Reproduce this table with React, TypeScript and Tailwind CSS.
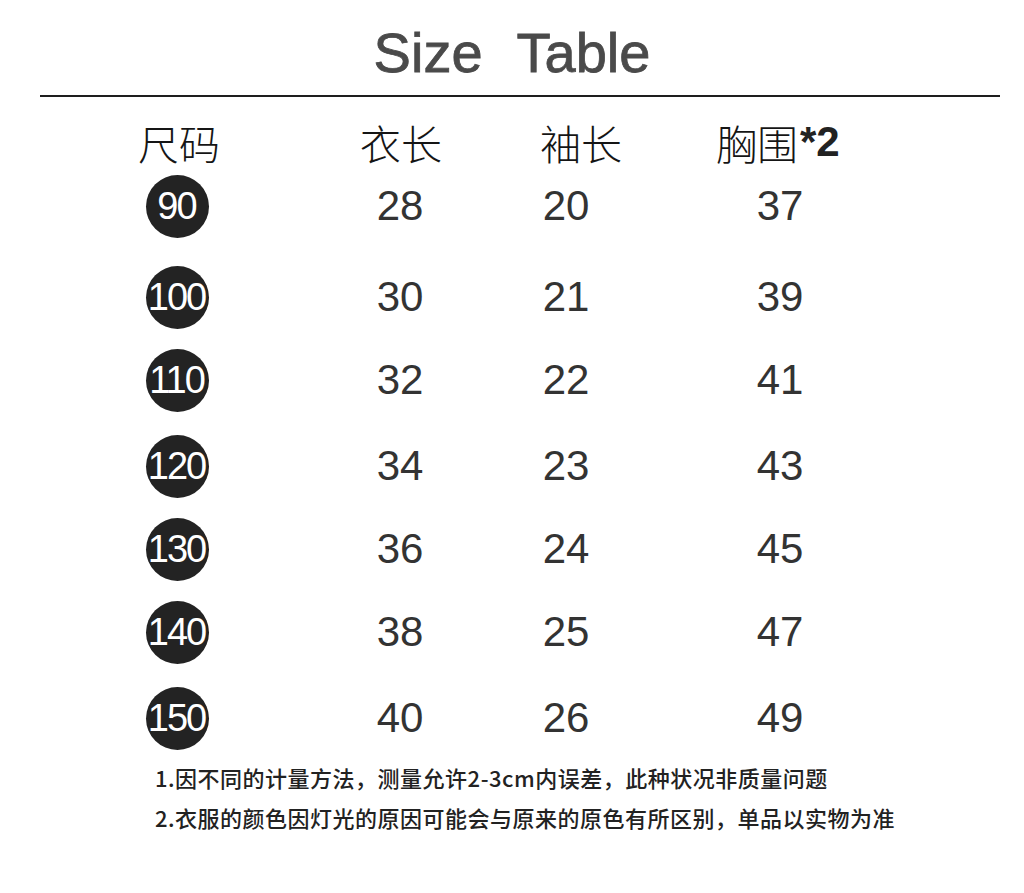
import React from 'react';

const rows = [
  { size: '90', a: '28', b: '20', c: '37', mt: 'mt-0' },
  { size: '100', a: '30', b: '21', c: '39', mt: 'mt-[21px]' },
  { size: '110', a: '32', b: '22', c: '41', mt: 'mt-[13px]' },
  { size: '120', a: '34', b: '23', c: '43', mt: 'mt-[16px]' },
  { size: '130', a: '36', b: '24', c: '45', mt: 'mt-[13px]' },
  { size: '140', a: '38', b: '25', c: '47', mt: 'mt-[13px]' },
  { size: '150', a: '40', b: '26', c: '49', mt: 'mt-[16px]' },
];

const sans = 'font-["Liberation_Sans",Arial,sans-serif]';
const cjk = 'font-["Noto_Sans_CJK_SC",sans-serif]';

export default function App() {
  return (
    <div className="w-[1024px] h-[893px] bg-white overflow-hidden">
      {/* title */}
      <div className="h-[95px] pt-[25px] flex justify-center gap-[34px]">
        <span className={`${sans} text-[56px] leading-none text-[#4a4a4a] [-webkit-text-stroke:0.8px_#4a4a4a]`}>Size</span>
        <span className={`${sans} text-[56px] leading-none text-[#4a4a4a] [-webkit-text-stroke:0.8px_#4a4a4a]`}>Table</span>
      </div>
      <div className="ml-[40px] w-[960px] h-[2px] bg-[#1e1e1e]" />

      {/* header */}
      <div className={`mt-[16px] h-[58px] flex items-center pl-[138px] ${cjk} text-[41px] leading-none text-[#151515] font-light`}>
        <span className="w-[222px]">尺码</span>
        <span className="w-[180px]">衣长</span>
        <span className="w-[176px]">袖长</span>
        <span className="flex items-center">
          胸围<span className={`${sans} font-bold text-[42px] text-[#222] ml-[2px]`}>*2</span>
        </span>
      </div>

      {/* rows */}
      {rows.map(r => (
        <div key={r.size} className={`${r.mt} h-[70px] flex items-center pl-[117px] ${sans} leading-none`}>
          <div className="w-[120px] flex justify-center">
            <div className="w-[63px] h-[63px] rounded-full bg-[#232323] flex items-center justify-center">
              <span className="text-white text-[38px] tracking-[-2px] pr-[1px]">{r.size}</span>
            </div>
          </div>
          <div className="ml-[103px] w-[120px] text-center text-[42px] text-[#333]">{r.a}</div>
          <div className="ml-[46px] w-[120px] text-center text-[42px] text-[#333]">{r.b}</div>
          <div className="ml-[94px] w-[120px] text-center text-[42px] text-[#333]">{r.c}</div>
        </div>
      ))}

      {/* notes */}
      <div className={`mt-[4px] pl-[155px] ${cjk} font-medium text-[22px] leading-[40px] text-[#222] tracking-[0.5px]`}>
        <p>1.因不同的计量方法，测量允许2-3cm内误差，此种状况非质量问题</p>
        <p>2.衣服的颜色因灯光的原因可能会与原来的原色有所区别，单品以实物为准</p>
      </div>
    </div>
  );
}
